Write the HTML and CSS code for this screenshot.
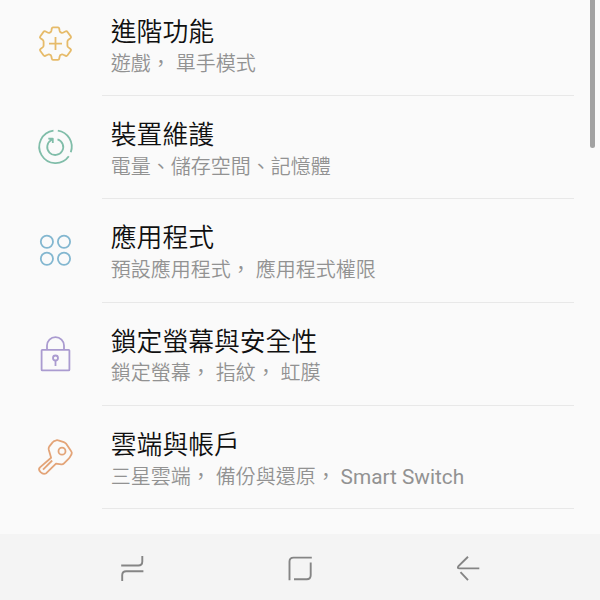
FILE: index.html
```html
<!DOCTYPE html>
<html lang="zh-Hant">
<head>
<meta charset="utf-8">
<title>設定</title>
<link rel="stylesheet" href="styles.css">
</head>
<body>
<main class="settings">
  <ul class="list">
    <li class="row">
      <svg class="icon gear" viewBox="0 0 50 50"><path d="M23 8.4H28Q29 8.4 29.2 9.5L29.7 12Q30 13.2 31.2 13.6Q32.3 14.1 33.4 13.5L35.8 12.3Q36.8 11.9 37.5 12.9L40.8 17.4Q41.5 18.4 40.5 19.2L38.4 20.8Q37.4 21.6 37.4 22.8V26.4Q37.4 27.6 38.4 28.4L40.5 30Q41.5 30.8 40.8 31.8L37.5 36.3Q36.8 37.3 35.8 36.9L33.4 35.7Q32.3 35.1 31.2 35.6Q30 36 29.7 37.2L29.2 39.7Q29 40.8 28 40.8H23Q22 40.8 21.8 39.7L21.3 37.2Q21 36 19.8 35.6Q18.7 35.1 17.6 35.7L15.2 36.9Q14.2 37.3 13.5 36.3L10.2 31.8Q9.5 30.8 10.5 30L12.6 28.4Q13.6 27.6 13.6 26.4V22.8Q13.6 21.6 12.6 20.8L10.5 19.2Q9.5 18.4 10.2 17.4L13.5 12.9Q14.2 11.9 15.2 12.3L17.6 13.5Q18.7 14.1 19.8 13.6Q21 13.2 21.3 12L21.8 9.5Q22 8.4 23 8.4Z"/><path d="M25.5 18.1v13M19 24.6h13"/></svg>
      <div class="text"><h2>進階功能</h2><p>遊戲， 單手模式</p></div>
    </li>
    <li class="row">
      <svg class="icon care" viewBox="0 0 50 50"><path d="M23.5 8.6A16.3 16.3 0 1 0 38.8 34.3M27.8 8.6A16.3 16.3 0 0 1 40.8 30.2"/><path d="M27.5 17.3A8 8 0 1 1 21.3 18L19.5 16.5M18.3 16.7H22.8V21"/></svg>
      <div class="text"><h2>裝置維護</h2><p>電量、儲存空間、記憶體</p></div>
    </li>
    <li class="row">
      <svg class="icon apps" viewBox="0 0 50 50"><circle cx="16.9" cy="16.7" r="6.1"/><circle cx="34" cy="16.7" r="6.1"/><circle cx="16.9" cy="33.7" r="6.1"/><circle cx="34" cy="33.7" r="6.1"/></svg>
      <div class="text"><h2>應用程式</h2><p>預設應用程式， 應用程式權限</p></div>
    </li>
    <li class="row">
      <svg class="icon lock" viewBox="0 0 50 50"><rect x="11.6" y="20.8" width="27.8" height="20.6" rx=".7"/><path d="M17 20.5V16.6a8.5 8.5 0 0 1 17 0V20.5M25.5 31.6V37"/><circle cx="25.5" cy="29" r="2.5"/></svg>
      <div class="text"><h2>鎖定螢幕與安全性</h2><p>鎖定螢幕， 指紋， 虹膜</p></div>
    </li>
    <li class="row">
      <svg class="icon key" viewBox="0 0 50 50"><path d="M21.1 25.7L18.7 17.4Q18.4 16 19.2 14.6L22.6 10.4Q23.4 9 26.2 8.3Q27.2 8 28.3 8.4L33.8 10.2Q35 10.6 36 11.6L41.2 19.2Q42.3 20.7 41.5 22.3L39.9 25.1Q39.2 26.3 38 27.4L34 31.4Q32.8 32.7 31.2 32.4L26 31.6L16.3 41.2Q13.3 42.8 10.6 40.2Q8 37.5 9.7 35.6Z"/><path d="M13 37.7L22.2 28.5"/><circle cx="32" cy="19.2" r="3.5"/></svg>
      <div class="text"><h2>雲端與帳戶</h2><p>三星雲端， 備份與還原， <span class="latin">Smart Switch</span></p></div>
    </li>
  </ul>
  <div class="scrollbar"></div>
</main>
<nav class="navbar">
  <svg viewBox="0 0 40 40"><path d="M9.2 16.5H26.3Q30.3 16.5 30.3 12.5V7M31.4 22.3H14.2Q10.2 22.3 10.2 26.3V32"/></svg>
  <svg viewBox="0 0 40 40"><path d="M9.5 31.2V12.6Q9.5 8.6 13.5 8.6H31.8M30.7 13.4V26.2Q30.7 30.2 26.7 30.2H14"/></svg>
  <svg viewBox="0 0 40 40"><path d="M20 7.7L10.5 17.1Q8.8 19.4 11.5 19.4H31.3M12.5 23.2L20 31.2"/></svg>
</nav>
</body>
</html>
```
FILE: styles.css
```css
* {
  box-sizing: border-box;
  margin: 0;
  padding: 0;
}

body {
  display: flex;
  flex-direction: column;
  height: 600px;
  overflow: hidden;
  background: #fafafa;
  font-family: Roboto, "Noto Sans CJK TC", sans-serif;
}

.settings {
  position: relative;
  flex: 1;
  min-height: 0;
  overflow: hidden;
}

.list {
  list-style: none;
  margin-top: -7.3px;
}

.row {
  display: flex;
  align-items: center;
  height: 103.3px;
  padding-right: 26px;
}

.icon {
  flex: none;
  width: 50px;
  height: 50px;
  margin: -1.4px 22px 0 30px;
  fill: none;
  stroke-width: 1.8;
  stroke-linejoin: round;
}

.gear { stroke: #e6bb6a; }
.care { stroke: #80bda9; }
.apps { stroke: #83b7d0; }
.lock { stroke: #aa9bd0; }
.key { stroke: #e3a478; }

.text {
  flex: 1;
  height: 100%;
  padding: 20.2px 0 0 8.8px;
  border-bottom: 1px solid #e8e8e8;
  white-space: nowrap;
}

h2 {
  margin-bottom: -0.3px;
  font-size: 25.8px;
  line-height: 38px;
  font-weight: 350;
  color: #101010;
}

p {
  font-size: 20px;
  line-height: 26px;
  font-weight: 350;
  color: #929292;
}

.latin {
  font-size: 20.8px;
  font-weight: 400;
}

.scrollbar {
  position: absolute;
  top: -4px;
  right: 5px;
  width: 5px;
  height: 152px;
  border-radius: 3px;
  background: #a2a2a2;
}

.navbar {
  display: flex;
  justify-content: space-between;
  height: 66px;
  padding: 10px 112px 0;
  background: #f4f4f4;
}

.navbar svg {
  width: 40px;
  height: 40px;
  margin-top: 5px;
  fill: none;
  stroke: #858585;
  stroke-width: 1.9;
}
```
